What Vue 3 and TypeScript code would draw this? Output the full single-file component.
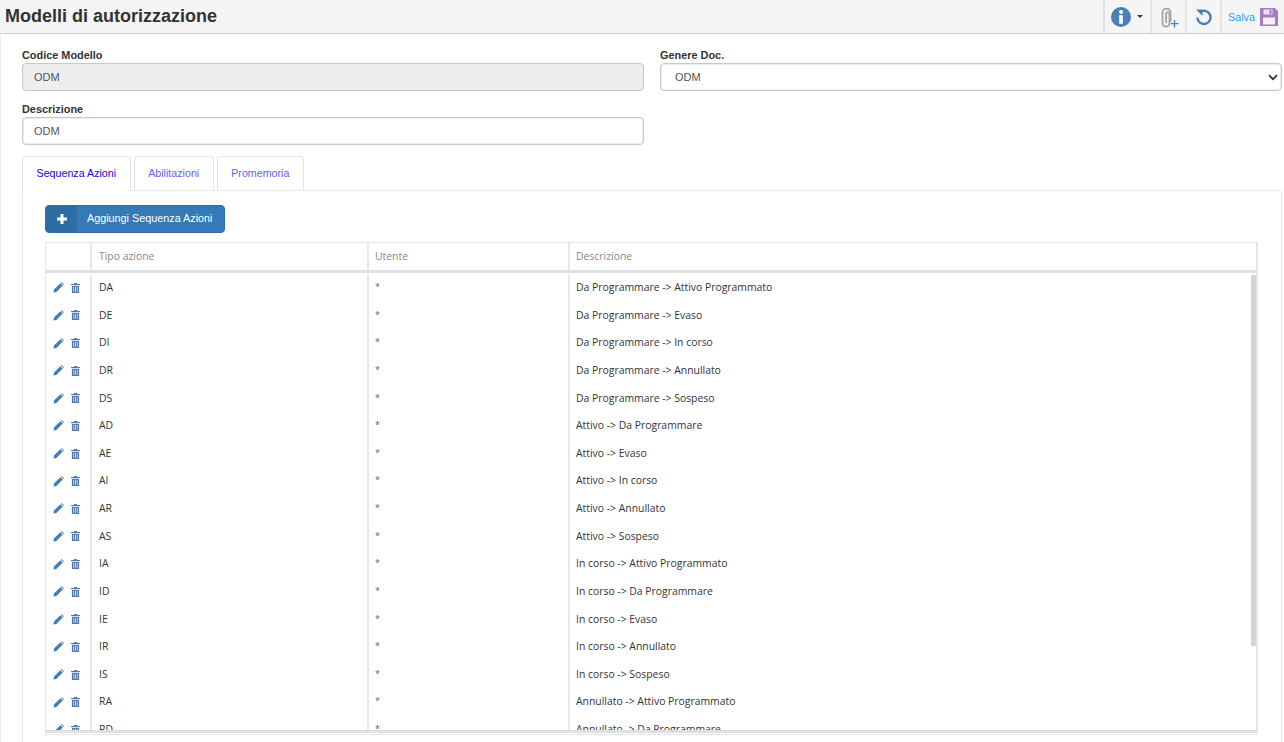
<template>
  <div class="page">
    <header class="topbar">
      <h1>Modelli di autorizzazione</h1>
      <div class="tools">
        <button class="tool tool-info">
          <svg width="20" height="20" viewBox="0 0 20 20">
            <circle cx="10" cy="10" r="10" fill="#4a80b8" />
            <circle cx="10" cy="5" r="2" fill="#fff" />
            <rect x="8.2" y="8.2" width="3.6" height="8.6" fill="#fff" />
          </svg>
          <span class="caret"></span>
        </button>
        <button class="tool tool-clip">
          <svg width="19" height="20" viewBox="0 0 19 20" fill="none">
            <path d="M10.5 14V4.5a4 4 0 0 0-8 0V15a3.500 3.500 0 0 0 7 0V6a1.700 1.700 0 0 0-3.400 0v9" stroke="#a8a8a8" stroke-width="1.900" />
            <path d="M14.500 12v7.500M11 15.700h7.500" stroke="#4a80b8" stroke-width="1.300" />
          </svg>
        </button>
        <button class="tool tool-undo">
          <svg width="18" height="18" viewBox="0 0 18 18" fill="none">
            <path d="M4.600 4.500A6.600 6.600 0 1 1 2.400 9.500" stroke="#4a80b8" stroke-width="2.400" />
            <path d="M1 1.500h6.500v6.500z" fill="#4a80b8" />
          </svg>
        </button>
        <button class="tool tool-save">
          <span>Salva</span>
          <svg width="18" height="18" viewBox="0 0 18 18">
            <path d="M0 0h15l3 3v15H0z" fill="#a57cc4" />
            <rect x="3.500" y="1.500" width="9" height="5" fill="#e9dff1" />
            <rect x="9.500" y="2" width="2" height="4" fill="#a57cc4" />
            <rect x="3" y="9.500" width="12" height="7" fill="#f6f1f9" />
          </svg>
        </button>
      </div>
    </header>

    <section class="form">
      <div class="form-grid">
        <div class="field">
          <label>Codice Modello</label>
          <input class="ctl" value="ODM" disabled />
        </div>
        <div class="field">
          <label>Genere Doc.</label>
          <div class="select ctl">
            <span>ODM</span>
            <svg width="10" height="7" viewBox="0 0 10 7" fill="none">
              <path d="M1 1.200 5 5.200l4-4" stroke="#333" stroke-width="1.700" />
            </svg>
          </div>
        </div>
        <div class="field">
          <label>Descrizione</label>
          <input class="ctl" value="ODM" />
        </div>
      </div>

      <nav class="tabs">
        <a v-for="(t, i) in tabs" :key="t" class="tab" :class="{ active: i === 0 }">{{ t }}</a>
      </nav>

      <div class="tab-panel">
        <button class="add-btn">
          <span class="add-ico">
            <svg width="10" height="10" viewBox="0 0 10 10"><path d="M3.500 0h3v3.500H10v3H6.500V10h-3V6.500H0v-3h3.500z" fill="#fff" /></svg>
          </span>
          <span class="add-txt">Aggiungi Sequenza Azioni</span>
        </button>

        <div class="grid">
          <div class="grid-head">
            <div class="c-act"></div>
            <div class="c-tipo">Tipo azione</div>
            <div class="c-ute">Utente</div>
            <div class="c-desc">Descrizione</div>
          </div>
          <div class="grid-body">
            <div class="scroll-thumb"></div>
            <div v-for="r in rows" :key="r[0]" class="row">
              <div class="c-act">
                <svg width="11" height="11" viewBox="0 0 11 11">
                  <path d="M0.500 10.500 1 7.600 7.400 1.200l2.400 2.400L3.400 10z" fill="#3f7fb8" />
                  <path d="M8 .6 8.700 0 11 2.300l-.6.700z" fill="#3f7fb8" />
                </svg>
                <svg width="9" height="10" viewBox="0 0 10 11">
                  <path d="M3.500 0h3l.5 1h3v1.200H0V1h3zM1 3h8v8H1z" fill="#4f78b0" />
                  <path d="M3 4.200v5.600M5 4.200v5.600M7 4.200v5.600" stroke="#dbe6f2" stroke-width=".9" />
                </svg>
              </div>
              <div class="c-tipo">{{ r[0] }}</div>
              <div class="c-ute"><span class="star">*</span></div>
              <div class="c-desc">{{ r[1] }}</div>
            </div>
          </div>
        </div>
        <div class="grid-foot"></div>
      </div>
    </section>
  </div>
</template>

<script setup lang="ts">
const tabs = ['Sequenza Azioni', 'Abilitazioni', 'Promemoria'];

const rows: [string, string][] = [
  ['DA', 'Da Programmare -> Attivo Programmato'],
  ['DE', 'Da Programmare -> Evaso'],
  ['DI', 'Da Programmare -> In corso'],
  ['DR', 'Da Programmare -> Annullato'],
  ['DS', 'Da Programmare -> Sospeso'],
  ['AD', 'Attivo -> Da Programmare'],
  ['AE', 'Attivo -> Evaso'],
  ['AI', 'Attivo -> In corso'],
  ['AR', 'Attivo -> Annullato'],
  ['AS', 'Attivo -> Sospeso'],
  ['IA', 'In corso -> Attivo Programmato'],
  ['ID', 'In corso -> Da Programmare'],
  ['IE', 'In corso -> Evaso'],
  ['IR', 'In corso -> Annullato'],
  ['IS', 'In corso -> Sospeso'],
  ['RA', 'Annullato -> Attivo Programmato'],
  ['RD', 'Annullato -> Da Programmare'],
];
</script>

<style>
html, body { margin: 0; background: #fff; overflow: hidden; }
</style>

<style scoped>
.page { height: 742px; overflow: hidden; font-family: "Liberation Sans", Arial, sans-serif; color: #333; position: relative; }
.topbar { height: 33px; background: #f5f5f5; border-bottom: 1px solid #ccc; display: flex; justify-content: space-between; align-items: stretch; }
h1 { margin: 0; padding: 0 0 0 5px; font-size: 18px; line-height: 32px; font-weight: 700; color: #333; }
.tools { display: flex; }
.tool { box-sizing: border-box; border: 0; border-left: 2px solid #e3e3e3; background: transparent; padding: 0; display: flex; align-items: center; justify-content: center; height: 33px; }
.tool-info { width: 47px; gap: 6px; padding-right: 2px; }
.caret { width: 0; height: 0; border-left: 3.5px solid transparent; border-right: 3.5px solid transparent; border-top: 3.5px solid #333; }
.tool-clip { width: 35px; padding: 2px 0 0 2px; }
.tool-undo { width: 35px; }
.tool-save { width: 64px; gap: 5px; justify-content: flex-start; padding-left: 6px; color: #2a9df4; font: 10.8px "Liberation Sans", Arial, sans-serif; }

.form { padding: 13px 2px 0 21px; border-left: 1px solid #eee; height: 695px; }
.form-grid { display: grid; grid-template-columns: 622px 622px; column-gap: 16px; row-gap: 10px; }
label { display: block; font-size: 10.9px; line-height: 16px; font-weight: 700; margin-bottom: 0; color: #333; }
.ctl { box-sizing: border-box; display: flex; align-items: center; width: 100%; height: 28px; border: 1px solid #c8c8c8; border-radius: 4px; box-shadow: inset 0 0 0 1px #ececec; padding: 0 11px; font: 11px "Liberation Sans", Arial, sans-serif; color: #555; background: #fff; outline: none; }
.ctl:disabled { background: #eee; }
.select { justify-content: space-between; padding-right: 3px; padding-left: 14px; }

.tabs { display: flex; gap: 3px; margin-top: 11px; position: relative; z-index: 1; height: 35px; }
.tab { box-sizing: border-box; height: 34px; padding: 0 13.5px; border: 1px solid #e4e4e4; border-bottom: 0; border-radius: 4px 4px 0 0; font-size: 10.7px; line-height: 33px; color: #6a5cf0; }
.tab.active { height: 35px; background: #fff; color: #2200dd; }
.tab-panel { box-sizing: border-box; margin-top: -1px; height: 560px; padding: 14px 23px 0 22px; border: 1px solid #e8e8e8; border-radius: 0 4px 0 0; }

.add-btn { display: flex; height: 28px; width: 180px; padding: 0; border: 1px solid #2e6da4; border-radius: 4px; background: #337ab7; color: #fff; font: 10.8px "Liberation Sans", Arial, sans-serif; overflow: hidden; }
.add-ico { width: 31px; height: 100%; background: #2e6da4; display: flex; align-items: center; justify-content: center; }
.add-txt { flex: 1; line-height: 25px; white-space: nowrap; text-align: left; padding-left: 10px; }

.grid { margin-top: 9px; border: 1px solid #e6e6e6; border-right-width: 2px; border-bottom: 3px solid #e0e0e0; font-family: "Open Sans", sans-serif; font-size: 10.4px; height: 491px; box-sizing: border-box; display: flex; flex-direction: column; overflow: hidden; }
.grid-foot { height: 1px; margin-top: 1px; background: #e6e6e6; }
.grid-head { display: flex; flex: none; height: 27px; border-bottom: 3px solid #e0e0e0; color: #888; line-height: 27px; }
.grid-body { position: relative; flex: 1; overflow: hidden; padding-top: 1px; }
.scroll-thumb { position: absolute; top: 2px; right: 0; width: 5px; height: 371px; background: #d4d4d4; }
.row { display: flex; height: 27.63px; line-height: 27.63px; color: #333; }
.c-act { box-sizing: border-box; width: 46px; flex: none; display: flex; align-items: center; gap: 7px; padding-left: 7px; border-right: 2px solid #e8e8e8; }
.c-tipo { box-sizing: border-box; width: 277px; flex: none; padding-left: 7px; border-right: 2px solid #e8e8e8; }
.c-ute { box-sizing: border-box; width: 201px; flex: none; padding-left: 6px; border-right: 2px solid #e8e8e8; }
.c-desc { flex: 1; padding-left: 6px; }
.star { color: #4a5f9a; font-size: 9px; position: relative; top: -1px; }
</style>
